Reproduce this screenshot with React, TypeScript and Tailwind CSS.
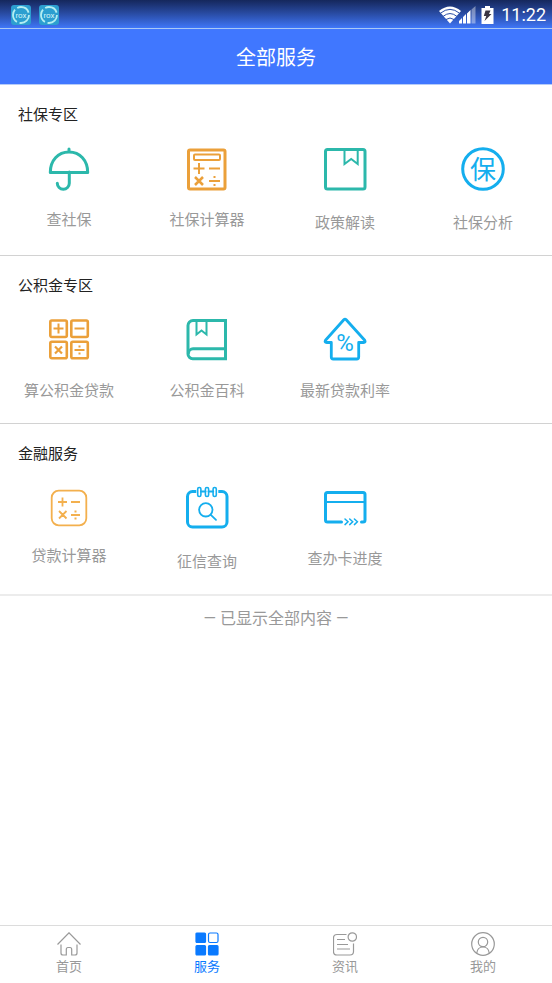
import type { ReactNode } from "react";
import { clsx } from "clsx";

type Service = {
  label: string;
  icon: ReactNode;
  spacing?: "tight" | "loose";
};

type Section = {
  title: string;
  services: Service[];
};

const TEAL = "#2cb8ab";
const ORANGE = "#eba03a";
const AMBER = "#f3b04e";
const CYAN = "#14aeee";

function Glyph({ color, width = 3, children }: { color: string; width?: number; children: ReactNode }) {
  return (
    <svg
      viewBox="0 0 44 44"
      className="h-11 w-11 overflow-visible"
      fill="none"
      stroke={color}
      strokeWidth={width}
      strokeLinecap="round"
      strokeLinejoin="round"
      aria-hidden="true"
    >
      {children}
    </svg>
  );
}

const umbrella = (
  <Glyph color={TEAL}>
    <path d="M22 2v3M3.3 25.500C3.3 13.500 11 5 22 5s18.700 8.500 18.700 20.500zM22.300 25v11.300a6 6 0 0 1-12 0" />
  </Glyph>
);

const calculator = (
  <Glyph color={ORANGE}>
    <rect x="3.500" y="3" width="36.500" height="39" rx="1.500" />
    <rect x="9" y="7.500" width="26" height="5.500" rx="1" strokeWidth="2" />
    <path strokeWidth="2" strokeLinecap="butt" d="M8.500 21.500h11M14 16v11M24 21.500h11M24 34h11" />
    <path strokeWidth="2.500" strokeLinecap="butt" d="M10 30l8 8M18 30l-8 8" />
    <path fill={ORANGE} stroke="none" d="M28.500 29h2v2h-2zM28.500 37h2v2h-2z" />
  </Glyph>
);

const policy = (
  <Glyph color={TEAL}>
    <rect x="2.500" y="2.500" width="39.500" height="39.500" rx="2" />
    <path strokeWidth="2" strokeLinecap="butt" strokeLinejoin="miter" d="M21.500 3v14l6.700-5 6.500 5V3" />
  </Glyph>
);

const analysis = (
  <Glyph color={CYAN}>
    <circle cx="22" cy="22" r="20.300" />
    <text x="22" y="31.500" textAnchor="middle" fontSize="26" fill={CYAN} stroke="none">
      保
    </text>
  </Glyph>
);

const loanGrid = (
  <Glyph color={ORANGE} width={2.6}>
    <rect x="3.300" y="2.500" width="16.500" height="16.500" rx="1.500" />
    <rect x="24.300" y="2.500" width="16.500" height="16.500" rx="1.500" />
    <rect x="3.300" y="23.700" width="16.500" height="16.500" rx="1.500" />
    <rect x="24.300" y="23.700" width="16.500" height="16.500" rx="1.500" />
    <path strokeWidth="2" strokeLinecap="butt" d="M6.500 10.500h10M11.500 5.500v10M27.500 10.500h10M27.500 32h10" />
    <path strokeWidth="2.200" strokeLinecap="butt" d="M8 28.500l7 7M15 28.500l-7 7" />
    <path fill={ORANGE} stroke="none" d="M31.500 27.500h2v2h-2zM31.500 34.500h2v2h-2z" />
  </Glyph>
);

const book = (
  <Glyph color={TEAL}>
    <path strokeLinejoin="miter" d="M40.500 2.500H8a5 5 0 0 0-5 5V36a4.700 4.700 0 0 0 5 4.700h32.500z" />
    <path d="M3.500 35a4.500 4.500 0 0 1 4.500-4.200h32" />
    <path strokeWidth="2" strokeLinecap="butt" strokeLinejoin="miter" d="M11.500 3v13.500l5-4 5 4V3" />
  </Glyph>
);

const house = (
  <Glyph color={CYAN} width={2.8}>
    <path d="M20.800 1.700 2.500 22.300q-1.300 2.200 1.200 2.200H8.300V39q0 2 2 2h23.400q2 0 2-2V24.500h4.800q2.500 0 1.200-2.200L23.200 1.700q-1.200-1.200-2.400 0z" />
    <text x="22" y="33" textAnchor="middle" fontSize="24" fill={CYAN} stroke="none">
      %
    </text>
  </Glyph>
);

const loanCalculator = (
  <Glyph color={AMBER} width={1.8}>
    <rect x="4.700" y="4.700" width="34.600" height="34.600" rx="7" />
    <path strokeLinecap="butt" d="M11 16h9M15.500 11.500v9M24 16h9M24 29h9M12 25l7.500 7.500M19.500 25L12 32.500" />
    <path fill={AMBER} stroke="none" d="M27.500 24.500h2v2h-2zM27.500 31.500h2v2h-2z" />
  </Glyph>
);

const credit = (
  <Glyph color={CYAN}>
    <rect x="2.500" y="5.500" width="39.500" height="35.500" rx="5" />
    <path stroke="#fff" strokeWidth="4" strokeLinecap="butt" d="M11.300 5.500h22" />
    <g strokeWidth="1.600">
      <rect x="12.700" y="1.500" width="3.200" height="9" rx="1.500" />
      <rect x="20.400" y="1.500" width="3.200" height="9" rx="1.500" />
      <rect x="28.100" y="1.500" width="3.200" height="9" rx="1.500" />
      <path d="M16 5.500h4.400M23.700 5.500h4.400" strokeWidth="2.200" />
    </g>
    <circle cx="20.800" cy="23.800" r="6.700" strokeWidth="1.800" />
    <path strokeWidth="1.800" d="m25.800 28.800 5.200 5" />
  </Glyph>
);

const card = (
  <Glyph color={CYAN}>
    <path d="M18.500 36H4.500q-2 0-2-2V8.500q0-2 2-2H40q2 0 2 2V34q0 2-2 2h-1.500" />
    <path strokeWidth="2" d="M3 16h38.500" />
    <path strokeWidth="1.500" strokeLinejoin="miter" d="m22 33 3 2.800-3 2.800M26.700 33l3 2.800-3 2.800M31.400 33l3 2.800-3 2.800" />
  </Glyph>
);

const sections: Section[] = [
  {
    title: "社保专区",
    services: [
      { label: "查社保", icon: umbrella },
      { label: "社保计算器", icon: calculator },
      { label: "政策解读", icon: policy, spacing: "loose" },
      { label: "社保分析", icon: analysis, spacing: "loose" },
    ],
  },
  {
    title: "公积金专区",
    services: [
      { label: "算公积金贷款", icon: loanGrid },
      { label: "公积金百科", icon: book },
      { label: "最新贷款利率", icon: house },
    ],
  },
  {
    title: "金融服务",
    services: [
      { label: "贷款计算器", icon: loanCalculator, spacing: "tight" },
      { label: "征信查询", icon: credit, spacing: "loose" },
      { label: "查办卡进度", icon: card },
    ],
  },
];

const tabs = [
  {
    label: "首页",
    icon: (
      <path d="M.5 12.500 12 .8l11.500 11.700M4 12.500V21q0 2 2 2h3.300v-5.500q0-2 1.700-2h2q1.700 0 1.700 2V23H18q2 0 2-2v-8.500" />
    ),
  },
  {
    label: "服务",
    active: true,
    icon: (
      <>
        <g fill="currentColor">
          <rect x="1" y="1" width="9.500" height="9.500" rx="1" />
          <rect x="1" y="13.500" width="9.500" height="9.500" rx="1" />
          <rect x="13.500" y="13.500" width="9.500" height="9.500" rx="1" />
        </g>
        <rect x="13.500" y="1" width="9.500" height="9.500" rx="1.500" />
      </>
    ),
  },
  {
    label: "资讯",
    icon: (
      <>
        <path d="M13.500 2.500H4q-3.500 0-3.500 3.500v13.500Q.5 23 4 23h13q3.500 0 3.500-3.500V11.500M4 7.500h8M4 12.500h11M4 17h13" />
        <circle cx="19.300" cy="5" r="4.200" />
      </>
    ),
  },
  {
    label: "我的",
    icon: (
      <>
        <circle cx="12" cy="12" r="11.300" />
        <circle cx="12" cy="10" r="4.700" />
        <path d="M5.800 21q.7-6 6.200-6t6.200 6" />
      </>
    ),
  },
];

function AppBadge() {
  return (
    <svg viewBox="0 0 20 20" className="h-5 w-5" aria-hidden="true">
      <rect width="20" height="20" rx="3" fill="#2c9fd0" />
      <circle cx="10" cy="10" r="8" fill="none" stroke="#b4eef2" strokeWidth="1.800" strokeDasharray="14 2.750" />
      <text x="10" y="12.500" textAnchor="middle" fontSize="8" fill="#d5f4f8">
        rox
      </text>
    </svg>
  );
}

function StatusBar() {
  return (
    <div className="flex h-[29px] items-center border-b border-[#a9c8f5] bg-linear-to-b from-[#15275c] via-[#2a4da6] to-[#3f76f8] pt-0.5 pr-1.5 pl-[11px] text-white">
      <div className="flex gap-2">
        <AppBadge />
        <AppBadge />
      </div>
      <div className="ml-auto flex items-center">
        <svg viewBox="0 0 38 18" className="h-[18px] w-[38px]" fill="#fff" aria-hidden="true">
          <path d="M11 17.500 0 5Q11-4 22 5z" />
          <path d="M1.500 7.200Q11-.5 20.500 7.200M4.200 10.300Q11 4.800 17.800 10.300M7 13.500q4-3 8 0" fill="none" stroke="#2a4da6" strokeWidth="1" />
          <path d="M20 17.500V15l3-3v5.500zM24 17.500V11l3-3v9.500zM28 17.500V7.500L31.500 4v13.500z" />
          <path d="M32.500 17.500V3.500L36.500 0v17.500z" opacity=".4" />
        </svg>
        <svg viewBox="0 0 13 18" className="ml-1 h-[18px] w-[13px]" aria-hidden="true">
          <path d="M4 0h5v2h3.500v16H.5V2H4z" fill="#fff" />
          <path d="M4.500 4.500h5L8 8h2.500L3.500 15l1.800-5H2.800z" fill="#3a3542" />
        </svg>
        <span className="ml-[7px] text-lg leading-5">11:22</span>
      </div>
    </div>
  );
}

function ServiceSection({ title, services }: Section) {
  return (
    <section className="border-b border-[#d2d2d2] pt-[19px] pb-[21px] last:border-b-2 last:border-[#ececec]">
      <h2 className="px-[18px] text-[15px] leading-[22px] text-[#222]">{title}</h2>
      <div className="mt-[21px] grid grid-cols-4">
        {services.map(({ label, icon, spacing }) => (
          <button key={label} type="button" className="flex flex-col items-center">
            {icon}
            <span
              className={clsx(
                "text-[15px] leading-[22px] whitespace-nowrap text-[#999]",
                spacing === "tight" && "mt-[15px]",
                spacing === "loose" && "mt-[21px]",
                !spacing && "mt-[18px]",
              )}
            >
              {label}
            </span>
          </button>
        ))}
      </div>
    </section>
  );
}

export default function App() {
  return (
    <div className="flex min-h-screen flex-col bg-white font-[Roboto,'Noto_Sans_CJK_SC',sans-serif]" lang="zh-CN">
      <StatusBar />
      <header className="border-b border-[#b5cbf8] bg-[#4077ff] pt-4 pb-3 text-center text-white">
        <h1 className="text-[20px] leading-[27px]">全部服务</h1>
      </header>

      <main className="flex-1">
        <div>
          {sections.map((section) => (
            <ServiceSection key={section.title} {...section} />
          ))}
        </div>
        <p className="pt-[11px] text-center text-base leading-6 text-[#999]">— 已显示全部内容 —</p>
      </main>

      <nav className="grid grid-cols-4 border-t border-[#dcdcdc] pt-1.5 pb-2">
        {tabs.map(({ label, icon, active }) => (
          <a
            key={label}
            href="#"
            aria-current={active ? "page" : undefined}
            className={clsx("flex flex-col items-center", active ? "text-[#0a7aff]" : "text-[#999]")}
          >
            <svg viewBox="0 0 24 24" className="h-6 w-6" fill="none" stroke="currentColor" strokeWidth="1.200" aria-hidden="true">
              {icon}
            </svg>
            <span className="mt-[3px] text-[13px] leading-4">{label}</span>
          </a>
        ))}
      </nav>
    </div>
  );
}
